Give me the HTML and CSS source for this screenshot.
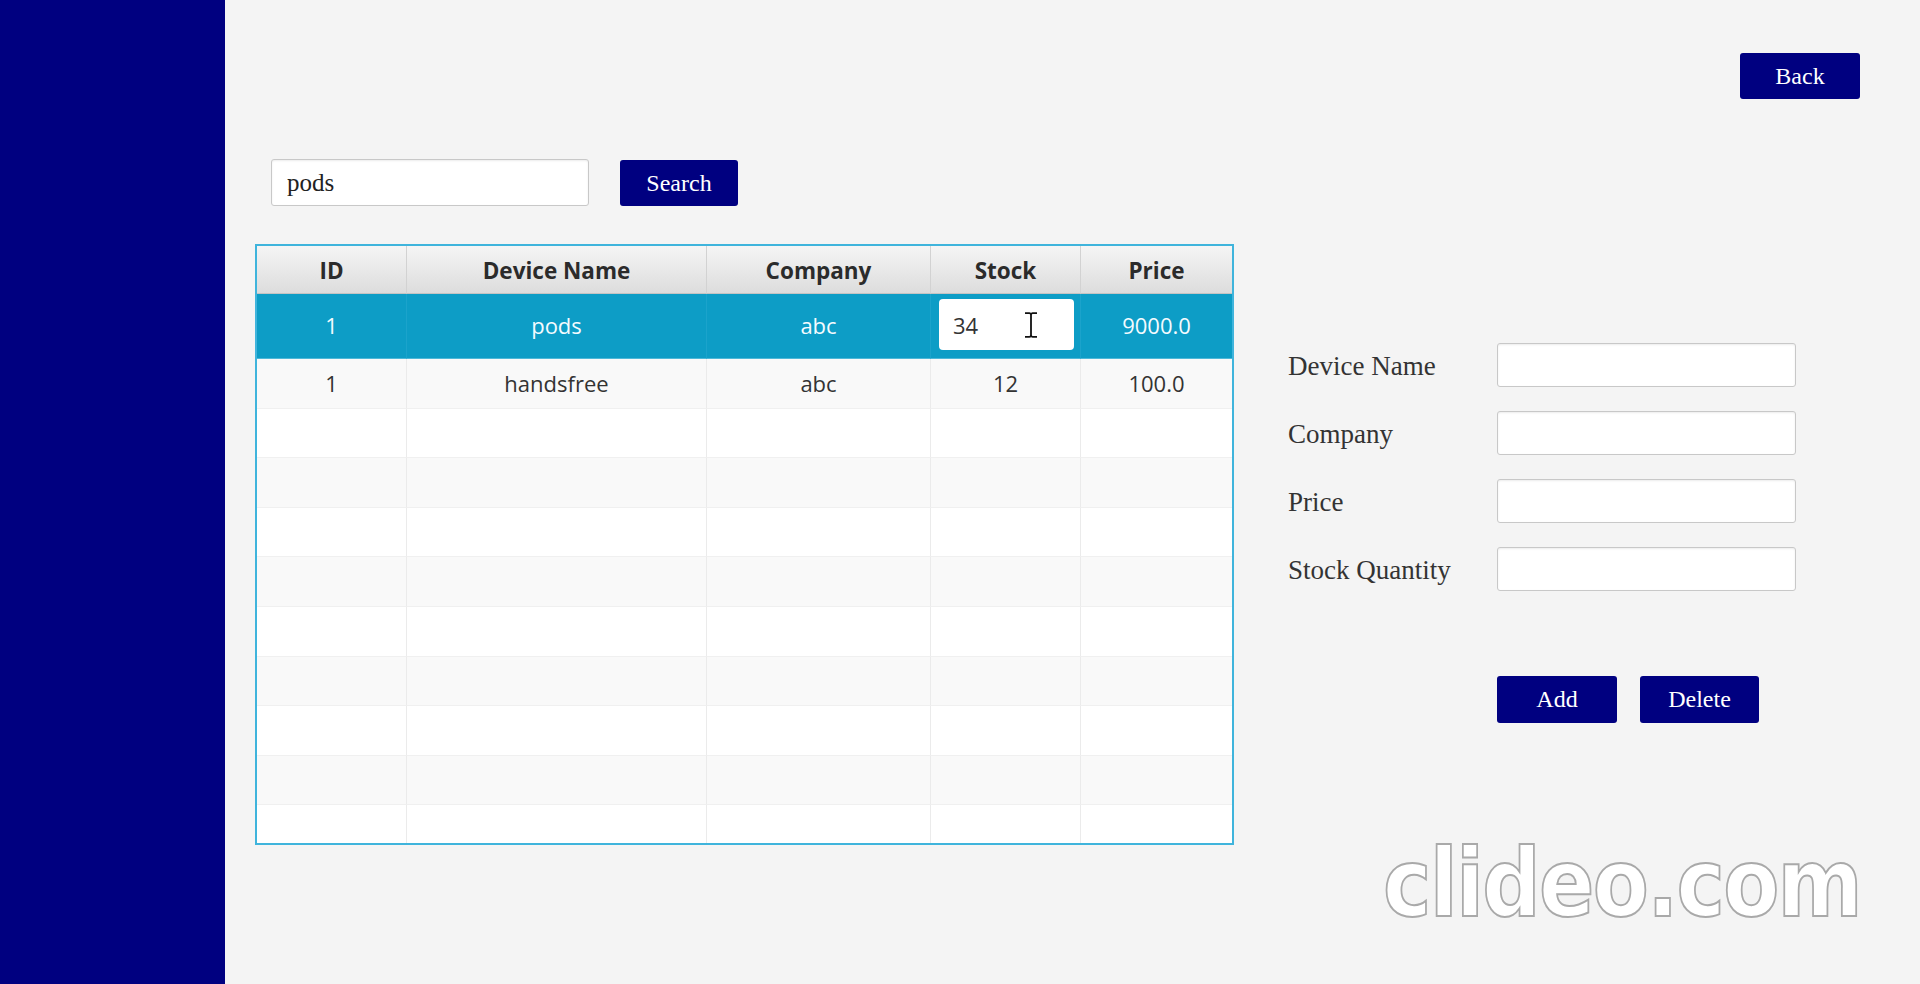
FILE: index.html
```html
<!DOCTYPE html>
<html lang="en">
<head>
<meta charset="utf-8">
<title>Devices</title>
<link rel="stylesheet" href="styles.css">
</head>
<body>
<div class="app">
  <aside class="sidebar"></aside>
  <main class="main">
    <div class="topbar">
      <button class="btn btn-back">Back</button>
    </div>
    <div class="search-row">
      <input class="text-input search-input" type="text" value="pods">
      <button class="btn btn-search">Search</button>
    </div>
    <div class="content">
      <div class="table">
        <div class="row head">
          <div class="cell">ID</div>
          <div class="cell">Device Name</div>
          <div class="cell">Company</div>
          <div class="cell">Stock</div>
          <div class="cell">Price</div>
        </div>
        <div class="row selected">
          <div class="cell">1</div>
          <div class="cell">pods</div>
          <div class="cell">abc</div>
          <div class="cell edit-cell">
            <div class="edit-box">34</div>
            <svg class="ibeam" width="14" height="26" viewBox="0 0 14 26"><path d="M1 1.2h4.3c1 0 1.7.6 1.7 1.6v20.4c0 1-.7 1.6-1.7 1.6H1M13 1.2H8.7c-1 0-1.7.6-1.7 1.6M13 24.8H8.7c-1 0-1.7-.6-1.7-1.6" fill="none" stroke="#111" stroke-width="1.8"/></svg>
          </div>
          <div class="cell">9000.0</div>
        </div>
        <div class="row">
          <div class="cell">1</div>
          <div class="cell">handsfree</div>
          <div class="cell">abc</div>
          <div class="cell">12</div>
          <div class="cell">100.0</div>
        </div>
        <div class="row"><div class="cell"></div><div class="cell"></div><div class="cell"></div><div class="cell"></div><div class="cell"></div></div>
        <div class="row"><div class="cell"></div><div class="cell"></div><div class="cell"></div><div class="cell"></div><div class="cell"></div></div>
        <div class="row"><div class="cell"></div><div class="cell"></div><div class="cell"></div><div class="cell"></div><div class="cell"></div></div>
        <div class="row"><div class="cell"></div><div class="cell"></div><div class="cell"></div><div class="cell"></div><div class="cell"></div></div>
        <div class="row"><div class="cell"></div><div class="cell"></div><div class="cell"></div><div class="cell"></div><div class="cell"></div></div>
        <div class="row"><div class="cell"></div><div class="cell"></div><div class="cell"></div><div class="cell"></div><div class="cell"></div></div>
        <div class="row"><div class="cell"></div><div class="cell"></div><div class="cell"></div><div class="cell"></div><div class="cell"></div></div>
        <div class="row"><div class="cell"></div><div class="cell"></div><div class="cell"></div><div class="cell"></div><div class="cell"></div></div>
        <div class="row"><div class="cell"></div><div class="cell"></div><div class="cell"></div><div class="cell"></div><div class="cell"></div></div>
      </div>
      <div class="form">
        <label class="form-label">Device Name</label>
        <input class="text-input form-input" type="text">
        <label class="form-label">Company</label>
        <input class="text-input form-input" type="text">
        <label class="form-label">Price</label>
        <input class="text-input form-input" type="text">
        <label class="form-label">Stock Quantity</label>
        <input class="text-input form-input" type="text">
        <div class="form-actions">
          <button class="btn btn-add">Add</button>
          <button class="btn btn-delete">Delete</button>
        </div>
      </div>
    </div>
  </main>
</div>
<div class="watermark">clideo.com</div>
</body>
</html>
```

FILE: styles.css
```css
* { box-sizing: border-box; }
html, body { margin: 0; padding: 0; }
body {
  background: #f4f4f4;
  font-family: "Liberation Serif", "Times New Roman", serif;
  overflow: hidden;
  position: relative;
  width: 1920px;
  height: 984px;
}
.app { display: flex; height: 984px; }
.sidebar { width: 225px; flex: none; background: #000080; }
.main { flex: 1; padding: 53px 60px 0 30px; }

.topbar { display: flex; justify-content: flex-end; }

.btn {
  background: #000080;
  color: #fff;
  border: none;
  border-radius: 3px;
  font-family: "Liberation Serif", "Times New Roman", serif;
  font-size: 24px;
  height: 46px;
  padding: 0;
  cursor: pointer;
}
.btn-back { width: 120px; }
.btn-search { width: 118px; padding-top: 2px; }

.text-input {
  background: #fff;
  border: 1px solid #c8c8c8;
  border-radius: 3px;
  box-shadow: inset 0 1px 2px rgba(0,0,0,0.08);
  font-family: "Liberation Serif", "Times New Roman", serif;
  color: #222;
  outline: none;
  margin: 0;
}

.search-row {
  display: flex;
  align-items: center;
  gap: 31px;
  margin-top: 60px;
  padding-left: 16px;
}
.search-input {
  width: 318px;
  height: 47px;
  font-size: 25px;
  padding: 1px 0 0 15px;
}

.content {
  display: flex;
  align-items: flex-start;
  margin-top: 38px;
}

.table {
  width: 979px;
  height: 601px;
  border: 2px solid #3fb4dc;
  background: #fff;
  overflow: hidden;
  font-family: "Open Sans", "Noto Sans", sans-serif;
  font-size: 22px;
  color: #333;
}
.row {
  display: grid;
  grid-template-columns: 150px 300px 224px 150px 151px;
  height: 49.6px;
  background: #fff;
}
.row:nth-child(odd) { background: #f9f9f9; }
.cell {
  display: flex;
  align-items: center;
  justify-content: center;
  border-right: 1px solid #ebebeb;
  border-bottom: 1px solid #f0f0f0;
}
.cell:last-child { border-right: none; }

.row.head {
  height: 48px;
  background: linear-gradient(#f5f5f5, #dcdcdc);
  font-weight: 700;
  font-size: 22.5px;
  color: #2b2b2b;
}
.row.head .cell {
  border-right-color: #d2d2d2;
  border-bottom: 1px solid #c4c4c4;
  padding-top: 1px;
}
.row.selected {
  height: 65px;
  background: #0d9dc6;
  color: #f4fbff;
}
.row.selected .cell {
  border-right-color: #1ba3cb;
  border-bottom-color: #4db8d8;
  padding-bottom: 2px;
}
.row.selected .edit-cell { padding: 5px 6px 8px 8px; }
.edit-cell {
  position: relative;
  align-items: stretch;
  justify-content: stretch;
}
.edit-box {
  flex: 1;
  background: #fff;
  border-radius: 4px;
  color: #333;
  display: flex;
  align-items: center;
  padding: 1px 0 0 14px;
}
.ibeam {
  position: absolute;
  left: 93px;
  top: 18px;
}

.form {
  margin-left: 54px;
  margin-top: 99px;
  display: grid;
  grid-template-columns: 209px 299px;
  row-gap: 24px;
  align-items: center;
}
.form-label {
  font-size: 27px;
  color: #333;
  padding-top: 3px;
}
.form-input {
  width: 299px;
  height: 44px;
  font-size: 24px;
  padding: 0 12px;
}
.form-actions {
  grid-column: 2;
  display: flex;
  gap: 23px;
  margin-top: 61px;
}
.btn-add { width: 120px; height: 47px; }
.btn-delete { width: 119px; height: 47px; }

.watermark {
  position: absolute;
  left: 1383px;
  top: 836px;
  font-family: "DejaVu Sans", sans-serif;
  font-weight: 700;
  font-size: 95px;
  line-height: 1;
  letter-spacing: -2px;
  color: #fff;
  -webkit-text-stroke: 2px #a9a9a9;
  white-space: nowrap;
  transform: scaleX(0.86);
  transform-origin: left top;
}
```
